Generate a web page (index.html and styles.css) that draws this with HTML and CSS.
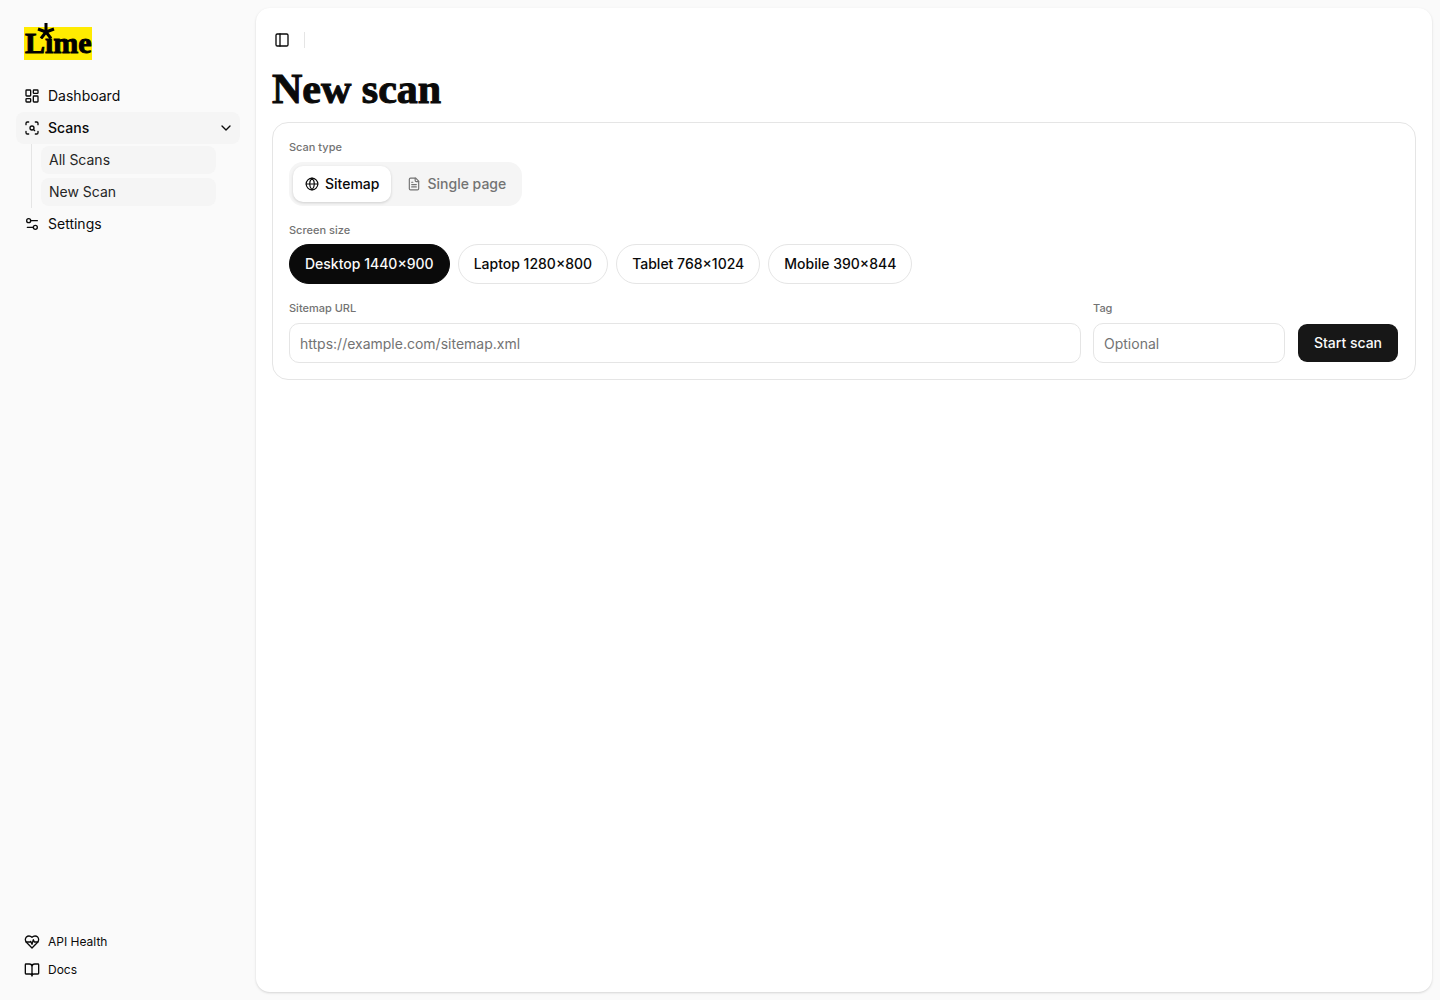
FILE: index.html
```html
<!DOCTYPE html>
<html lang="en">
<head>
  <meta charset="utf-8">
  <meta name="viewport" content="width=device-width, initial-scale=1">
  <title>New scan · Lime</title>
  <link rel="stylesheet" href="styles.css">
</head>
<body>
  <div class="shell">
    <aside class="sidebar">
      <a class="logo" href="#" aria-label="Lime">
        <span class="logo-text">Lıme</span>
        <svg class="logo-star" viewBox="0 0 18 16" aria-hidden="true"><path d="M9 9V0M9 9L1 6M9 9L17 6M9 9L4 15.500M9 9L14 15.500"/></svg>
      </a>
      <nav class="nav">
        <a class="nav-item" href="#">
          <svg class="icon" viewBox="0 0 24 24"><rect width="7" height="9" x="3" y="3" rx="1"/><rect width="7" height="5" x="14" y="3" rx="1"/><rect width="7" height="9" x="14" y="12" rx="1"/><rect width="7" height="5" x="3" y="16" rx="1"/></svg>
          Dashboard
        </a>
        <button class="nav-item nav-open" type="button" aria-expanded="true">
          <svg class="icon" viewBox="0 0 24 24"><path d="M3 7V5a2 2 0 0 1 2-2h2M17 3h2a2 2 0 0 1 2 2v2M21 17v2a2 2 0 0 1-2 2h-2M7 21H5a2 2 0 0 1-2-2v-2"/><circle cx="12" cy="12" r="3"/><path d="m16 16-1.900-1.900"/></svg>
          Scans
          <svg class="icon chevron" viewBox="0 0 24 24"><path d="m6 9 6 6 6-6"/></svg>
        </button>
        <div class="subnav">
          <a class="sub-item" href="#">All Scans</a>
          <a class="sub-item" href="#">New Scan</a>
        </div>
        <a class="nav-item" href="#">
          <svg class="icon" viewBox="0 0 24 24"><path d="M20 7h-9M14 17H5"/><circle cx="17" cy="17" r="3"/><circle cx="7" cy="7" r="3"/></svg>
          Settings
        </a>
      </nav>
      <nav class="foot-nav">
        <a class="foot-item" href="#">
          <svg class="icon" viewBox="0 0 24 24"><path d="M19 14c1.490-1.460 3-3.210 3-5.500A5.500 5.500 0 0 0 16.500 3c-1.760 0-3 .5-4.500 2-1.500-1.500-2.740-2-4.500-2A5.500 5.500 0 0 0 2 8.500c0 2.300 1.500 4.050 3 5.500l7 7Z"/><path d="M3.220 12H9.500l.5-1 2 4.500 2-7 1.500 3.500h5.270"/></svg>
          API Health
        </a>
        <a class="foot-item" href="#">
          <svg class="icon" viewBox="0 0 24 24"><path d="M12 7v14M3 18a1 1 0 0 1-1-1V4a1 1 0 0 1 1-1h5a4 4 0 0 1 4 4 4 4 0 0 1 4-4h5a1 1 0 0 1 1 1v13a1 1 0 0 1-1 1h-6a3 3 0 0 0-3 3 3 3 0 0 0-3-3z"/></svg>
          Docs
        </a>
      </nav>
    </aside>

    <main class="panel">
      <header class="topbar">
        <button class="toggle" type="button" aria-label="Toggle sidebar">
          <svg class="icon" viewBox="0 0 24 24"><rect width="18" height="18" x="3" y="3" rx="2"/><path d="M9 3v18"/></svg>
        </button>
        <span class="divider"></span>
      </header>
      <h1 class="title">New scan</h1>
      <form class="card">
        <div class="group">
          <span class="label" id="type-label">Scan type</span>
          <div class="tabs" role="tablist" aria-labelledby="type-label">
            <button class="tab tab-active" type="button" role="tab" aria-selected="true">
              <svg class="tab-icon" viewBox="0 0 24 24"><circle cx="12" cy="12" r="10"/><path d="M12 2a14.500 14.500 0 0 0 0 20 14.500 14.500 0 0 0 0-20M2 12h20"/></svg>
              Sitemap
            </button>
            <button class="tab" type="button" role="tab" aria-selected="false">
              <svg class="tab-icon" viewBox="0 0 24 24"><path d="M15 2H6a2 2 0 0 0-2 2v16a2 2 0 0 0 2 2h12a2 2 0 0 0 2-2V7Z"/><path d="M14 2v4a2 2 0 0 0 2 2h4M10 9H8M16 13H8M16 17H8"/></svg>
              Single page
            </button>
          </div>
        </div>
        <div class="group group-sizes">
          <span class="label" id="size-label">Screen size</span>
          <div class="sizes" role="group" aria-labelledby="size-label">
            <button class="pill pill-active" type="button" aria-pressed="true">Desktop 1440×900</button>
            <button class="pill" type="button" aria-pressed="false">Laptop 1280×800</button>
            <button class="pill" type="button" aria-pressed="false">Tablet 768×1024</button>
            <button class="pill" type="button" aria-pressed="false">Mobile 390×844</button>
          </div>
        </div>
        <div class="fields">
          <div class="group group-url">
            <label class="label" for="url">Sitemap URL</label>
            <input class="input" id="url" type="url" placeholder="https://example.com/sitemap.xml">
          </div>
          <div class="group group-tag">
            <label class="label" for="tag">Tag</label>
            <input class="input" id="tag" type="text" placeholder="Optional">
          </div>
          <button class="submit" type="submit">Start scan</button>
        </div>
      </form>
    </main>
  </div>
</body>
</html>
```
FILE: styles.css
```css
* { box-sizing: border-box; }

body {
  margin: 0;
  background: #fafafa;
  color: #0a0a0a;
  font: 400 14px/20px Inter, "Liberation Sans", sans-serif;
}

a { color: inherit; text-decoration: none; }
button, input { font: inherit; color: inherit; margin: 0; }
button { border: 0; background: none; cursor: pointer; white-space: nowrap; }

.icon, .tab-icon, .logo-star {
  fill: none;
  stroke: currentColor;
  stroke-width: 2;
  stroke-linecap: round;
  stroke-linejoin: round;
}
.icon { width: 16px; height: 16px; flex: none; }

.shell { display: flex; min-height: 100vh; }

.sidebar {
  display: flex;
  flex-direction: column;
  flex: none;
  width: 256px;
  padding: 27px 16px 16px;
}

.logo {
  position: relative;
  align-self: flex-start;
  margin-left: 8px;
  padding: 0 0 2px 1px;
  background: #ffeb00;
  color: #000;
}
.logo-text {
  display: block;
  font: 700 30px/31px "Liberation Serif", serif;
  -webkit-text-stroke: 1px currentColor;
}
.logo-star {
  position: absolute;
  left: 13px;
  top: -4px;
  width: 18px;
  height: 16px;
  stroke-width: 3;
  stroke-linecap: butt;
}

.nav { display: flex; flex-direction: column; margin-top: 20px; }
.nav-item {
  display: flex;
  align-items: center;
  gap: 8px;
  height: 32px;
  padding: 0 8px;
  border-radius: 8px;
}
.nav-open { background: #f5f5f5; font-weight: 500; padding-right: 6px; }
.chevron { margin-left: auto; }

.subnav {
  display: flex;
  flex-direction: column;
  gap: 4px;
  margin: 0 24px 0 15px;
  padding: 2px 0 2px 9px;
  border-left: 1px solid #e5e5e5;
}
.sub-item {
  height: 28px;
  padding: 4px 8px;
  border-radius: 8px;
  background: #f5f5f5;
  color: #262626;
}

.foot-nav { display: flex; flex-direction: column; margin-top: auto; }
.foot-item {
  display: flex;
  align-items: center;
  gap: 8px;
  height: 28px;
  padding: 0 8px;
  font-size: 12px;
  line-height: 16px;
}

.panel {
  flex: 1;
  min-width: 0;
  margin: 8px 8px 8px 0;
  padding: 16px;
  border-radius: 14px;
  background: #fff;
  box-shadow: 0 1px 3px rgba(0, 0, 0, 0.1), 0 1px 2px rgba(0, 0, 0, 0.06);
}
.topbar { display: flex; align-items: center; gap: 12px; height: 32px; }
.toggle { display: flex; padding: 2px; }
.divider { width: 1px; height: 16px; background: #e5e5e5; }

.title {
  margin: 12px 0;
  font: 700 42px/42px "Liberation Serif", serif;
  -webkit-text-stroke: 1px currentColor;
}

.card {
  display: flex;
  flex-direction: column;
  gap: 16px;
  padding: 16px;
  border: 1px solid #e5e5e5;
  border-radius: 16px;
}
.group { display: flex; flex-direction: column; gap: 7px; }
.group-sizes { gap: 6px; }
.label { font-size: 11px; line-height: 16px; font-weight: 500; color: #737373; }

.tabs {
  display: flex;
  align-self: flex-start;
  gap: 4px;
  padding: 4px;
  border-radius: 14px;
  background: #f5f5f5;
}
.tab {
  display: flex;
  align-items: center;
  gap: 6px;
  height: 36px;
  padding: 0 12px;
  border-radius: 10px;
  color: #737373;
  font-weight: 500;
}
.tab-active { background: #fff; color: #0a0a0a; box-shadow: 0 1px 3px rgba(0, 0, 0, 0.16); }
.tab-icon { width: 14px; height: 14px; flex: none; }

.sizes { display: flex; flex-wrap: wrap; gap: 8px; }
.pill {
  height: 40px;
  padding: 0 15px;
  border: 1px solid #e5e5e5;
  border-radius: 20px;
  font-weight: 500;
}
.pill-active { border-color: #0a0a0a; background: #0a0a0a; color: #fafafa; }

.fields { display: flex; align-items: flex-end; gap: 12px; }
.group-url { flex: 1; min-width: 0; }
.group-tag { width: 192px; }
.input {
  width: 100%;
  height: 40px;
  padding: 0 10px;
  border: 1px solid #e5e5e5;
  border-radius: 10px;
  background: #fff;
}
.input::placeholder { color: #737373; opacity: 1; }
.submit {
  width: 102px;
  height: 40px;
  padding: 0;
  border: 1px solid transparent;
  border-radius: 10px;
  background: #171717;
  background-clip: padding-box;
  color: #fafafa;
  font-weight: 500;
}

@media (max-width: 800px) {
  .shell { flex-direction: column; }
  .sidebar { width: auto; }
  .panel { margin-left: 8px; }
  .fields { flex-direction: column; align-items: stretch; }
  .group-tag { width: auto; }
}
```
